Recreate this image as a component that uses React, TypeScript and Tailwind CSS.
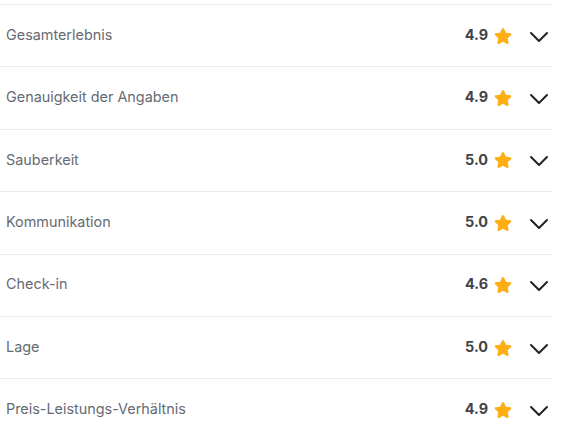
import { FaStar } from "react-icons/fa";

const ratings = [
	{ label: "Gesamterlebnis", value: "4.9" },
	{ label: "Genauigkeit der Angaben", value: "4.9" },
	{ label: "Sauberkeit", value: "5.0" },
	{ label: "Kommunikation", value: "5.0" },
	{ label: "Check-in", value: "4.6" },
	{ label: "Lage", value: "5.0" },
	{ label: "Preis-Leistungs-Verhältnis", value: "4.9" },
];

const Chevron = () => (
	<svg width="20" height="12" viewBox="0 0 20 12" fill="none">
		<path d="M2 2l8 8 8-8" stroke="#222" strokeWidth="2" strokeLinecap="round" strokeLinejoin="round" />
	</svg>
);

export default function App() {
	return (
		<div className="w-[565px] h-[440px] bg-white pt-[4px] overflow-hidden" style={{ fontFamily: "Inter, sans-serif" }}>
			<div className="w-[552px]">
				{ratings.map((r, index) => (
					<div
						key={`${r.label}_${index}`}
						className="h-[62.4px] border-t border-[#ebebeb] flex items-center pl-[6px] pr-[3px]"
					>
						<span className="flex-1 text-[14.4px] text-[#666b73] mb-[2px]">{r.label}</span>
						<span className="text-[14.4px] font-bold text-[#404348] mb-[2px]">{r.value}</span>
						<FaStar className="ml-[6px] text-[#fcae12] w-[18px] h-[18px]" />
						<span className="ml-[17px] mt-[2px]">
							<Chevron />
						</span>
					</div>
				))}
			</div>
		</div>
	);
}
